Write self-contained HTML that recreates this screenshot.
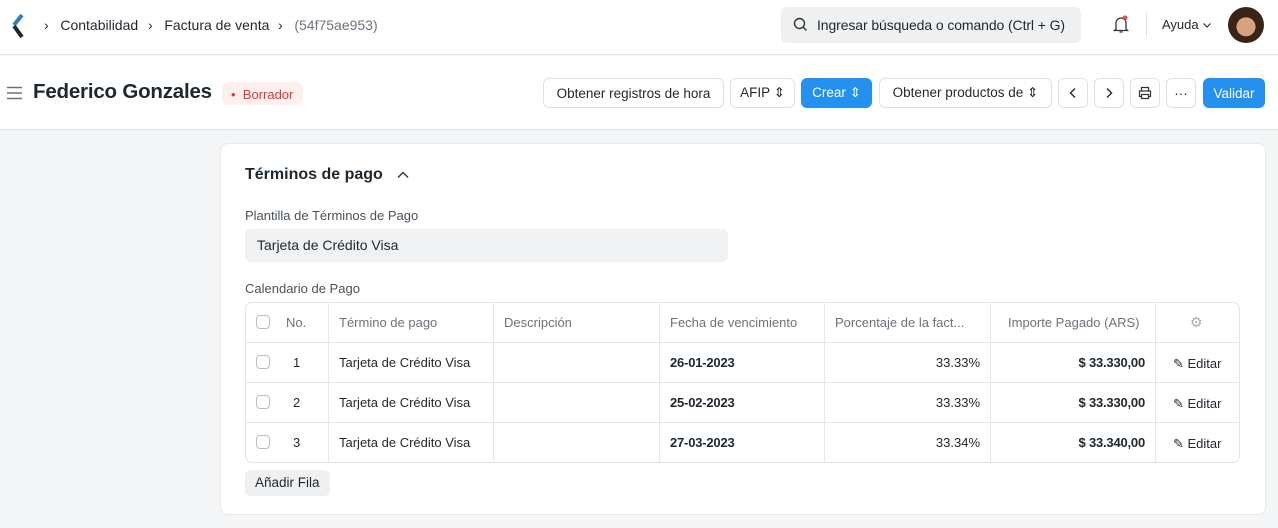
<!DOCTYPE html>
<html><head><meta charset="utf-8"><style>
*{box-sizing:border-box;margin:0;padding:0}
body{width:1278px;height:528px;background:#f4f5f6;font-family:"Liberation Sans",sans-serif;color:#1f272e;position:relative;overflow:hidden}
.abs{position:absolute}
.hdr{left:0;top:0;width:1278px;height:55px;background:#fff;border-bottom:1px solid #e8e9ea}
.tb{left:0;top:56px;width:1278px;height:74px;background:#fff;border-bottom:1px solid #e2e4e6}
.bc{font-size:14px;color:#1f272e;top:17px}
.btn{position:absolute;top:78px;height:30px;border:1px solid #dfe1e3;border-radius:6px;background:#fff;font-size:13.5px;display:flex;align-items:center;justify-content:center;color:#1f272e}
.blue{background:#2490ef;border-color:#2490ef;color:#fff}
.card{left:220px;top:143px;width:1046px;height:372px;background:#fff;border-radius:8px;border:1px solid #e8e9ea}
.t{position:absolute;font-size:13px}
.hl{position:absolute;height:1px;background:#e5e7ea}
.vl{position:absolute;width:1px;background:#e5e7ea}
.cb{position:absolute;width:14px;height:14px;border:1px solid #b8bec4;border-radius:4px;left:256px}
.g{color:#6c737a}
.b{font-weight:bold;letter-spacing:-0.2px}
</style></head><body>
<div class="abs hdr"></div>
<svg class="abs" style="left:10px;top:13px" width="16" height="26" viewBox="0 0 16 26"><path d="M12 2 L4 12" stroke="#2d7fbf" stroke-width="4"/><path d="M4 13 L12 24" stroke="#1f272e" stroke-width="4"/></svg>
<div class="abs bc" style="left:44px">›&nbsp;&nbsp; Contabilidad</div>
<div class="abs bc" style="left:148px">›&nbsp;&nbsp; Factura de venta</div>
<div class="abs bc" style="left:278px;color:#6c737a"><span style="color:#1f272e">›</span>&nbsp;&nbsp; (54f75ae953)</div>
<div class="abs" style="left:781px;top:7px;width:300px;height:36px;background:#eff0f1;border-radius:6px"></div>
<svg class="abs" style="left:793px;top:17px" width="15" height="15" viewBox="0 0 15 15"><circle cx="6.5" cy="6.5" r="5" stroke="#333" stroke-width="1.4" fill="none"/><path d="M10 10 L13.5 13.5" stroke="#333" stroke-width="1.4"/></svg>
<div class="abs" style="left:817px;top:17px;font-size:14px;color:#1f272e;letter-spacing:-0.1px">Ingresar búsqueda o comando (Ctrl + G)</div>
<svg class="abs" style="left:1112px;top:15px" width="18" height="20" viewBox="0 0 18 20"><path d="M4 14 V8 a5 5 0 0 1 10 0 V14 L15.5 15.5 H2.5 Z M7.5 17 h3" stroke="#333" stroke-width="1.3" fill="none"/><circle cx="13" cy="3" r="2.5" fill="#e24c4c"/></svg>
<div class="abs" style="left:1146px;top:13px;width:1px;height:24px;background:#dfe1e3"></div>
<div class="abs" style="left:1162px;top:17px;font-size:13px">Ayuda</div>
<svg class="abs" style="left:1202px;top:21px" width="10" height="8"><path d="M1.5 2.5l3.5 3.5 3.5-3.5" stroke="#333" stroke-width="1.2" fill="none"/></svg>
<div class="abs" style="left:1228px;top:7px;width:36px;height:36px;border-radius:50%;background:radial-gradient(circle at 50% 55%,#d9a27f 0 35%,#3a2418 36%)"></div>
<div class="abs tb"></div>
<svg class="abs" style="left:7px;top:86px" width="16" height="14"><path d="M0 1.5h15M0 7h15M0 12.5h15" stroke="#6c737a" stroke-width="1.5"/></svg>
<div class="abs" style="left:33px;top:80px;font-size:20.5px;font-weight:bold;letter-spacing:-0.2px">Federico Gonzales</div>
<div class="abs" style="left:222px;top:82px;width:81px;height:23px;background:#fff0f0;border-radius:6px;color:#e03636;font-size:13px;padding:5px 0 0 9px">•&nbsp; Borrador</div>
<div class="btn" style="left:543px;width:181px">Obtener registros de hora</div>
<div class="btn" style="left:730px;width:65px">AFIP ⇕</div>
<div class="btn blue" style="left:801px;width:71px">Crear ⇕</div>
<div class="btn" style="left:879px;width:173px">Obtener productos de ⇕</div>
<div class="btn" style="left:1058px;width:30px"><svg width="10" height="12"><path d="M7 1.5L2.5 6 7 10.5" stroke="#333" stroke-width="1.5" fill="none"/></svg></div>
<div class="btn" style="left:1094px;width:30px"><svg width="10" height="12"><path d="M3 1.5L7.5 6 3 10.5" stroke="#333" stroke-width="1.5" fill="none"/></svg></div>
<div class="btn" style="left:1130px;width:30px"><svg width="14" height="14" viewBox="0 0 14 14"><path d="M3.5 5V1.5h7V5M3.5 10.5H1.5V5h11v5.5h-2M3.5 8.5h7v4h-7z" stroke="#333" stroke-width="1.2" fill="none"/></svg></div>
<div class="btn" style="left:1166px;width:30px">···</div>
<div class="btn blue" style="left:1203px;width:62px">Validar</div>
<div class="abs card"></div>
<div class="abs" style="left:245px;top:166px;font-size:16px;font-weight:bold">Términos de pago</div>
<svg class="abs" style="left:396px;top:170px" width="14" height="10"><path d="M2 7.5L7 2.5 12 7.5" stroke="#333" stroke-width="1.4" fill="none"/></svg>
<div class="t" style="left:245px;top:208px;color:#4a5259">Plantilla de Términos de Pago</div>
<div class="abs" style="left:245px;top:229px;width:483px;height:33px;background:#f0f1f2;border-radius:6px;font-size:14px;padding:8px 12px">Tarjeta de Crédito Visa</div>
<div class="t" style="left:245px;top:281px;color:#4a5259">Calendario de Pago</div>
<div class="abs" style="left:245px;top:302px;width:995px;height:161px;border:1px solid #e2e4e6;border-radius:7px"></div>
<div class="hl" style="left:245px;top:342px;width:995px"></div>
<div class="hl" style="left:245px;top:382px;width:995px"></div>
<div class="hl" style="left:245px;top:422px;width:995px"></div>
<div class="vl" style="left:328px;top:302px;height:161px"></div>
<div class="vl" style="left:493px;top:302px;height:161px"></div>
<div class="vl" style="left:659px;top:302px;height:161px"></div>
<div class="vl" style="left:824px;top:302px;height:161px"></div>
<div class="vl" style="left:990px;top:302px;height:161px"></div>
<div class="vl" style="left:1155px;top:302px;height:161px"></div>
<div class="cb" style="top:315px"></div><div class="cb" style="top:355px"></div><div class="cb" style="top:395px"></div><div class="cb" style="top:435px"></div>
<div class="t g" style="left:286px;top:315px">No.</div>
<div class="t g" style="left:339px;top:315px">Término de pago</div>
<div class="t g" style="left:504px;top:315px">Descripción</div>
<div class="t g" style="left:670px;top:315px">Fecha de vencimiento</div>
<div class="t g" style="left:835px;top:315px">Porcentaje de la fact...</div>
<div class="t g" style="left:1008px;top:315px">Importe Pagado (ARS)</div>
<div class="t g" style="left:1190px;top:314px;font-size:14px;color:#aab">⚙</div>
<div class="t" style="left:293px;top:355px">1</div><div class="t" style="left:293px;top:395px">2</div><div class="t" style="left:293px;top:435px">3</div>
<div class="t" style="left:339px;top:355px">Tarjeta de Crédito Visa</div>
<div class="t" style="left:339px;top:395px">Tarjeta de Crédito Visa</div>
<div class="t" style="left:339px;top:435px">Tarjeta de Crédito Visa</div>
<div class="t b" style="left:670px;top:355px">26-01-2023</div>
<div class="t b" style="left:670px;top:395px">25-02-2023</div>
<div class="t b" style="left:670px;top:435px">27-03-2023</div>
<div class="t" style="left:900px;width:80px;text-align:right;top:355px">33.33%</div>
<div class="t" style="left:900px;width:80px;text-align:right;top:395px">33.33%</div>
<div class="t" style="left:900px;width:80px;text-align:right;top:435px">33.34%</div>
<div class="t b" style="left:1000px;width:145px;text-align:right;top:355px">$ 33.330,00</div>
<div class="t b" style="left:1000px;width:145px;text-align:right;top:395px">$ 33.330,00</div>
<div class="t b" style="left:1000px;width:145px;text-align:right;top:435px">$ 33.340,00</div>
<div class="t" style="left:1173px;top:356px">✎ Editar</div>
<div class="t" style="left:1173px;top:396px">✎ Editar</div>
<div class="t" style="left:1173px;top:436px">✎ Editar</div>
<div class="abs" style="left:245px;top:470px;width:85px;height:26px;background:#eff0f1;border-radius:6px;font-size:13.5px;padding:5px 10px">Añadir Fila</div>
</body></html>
